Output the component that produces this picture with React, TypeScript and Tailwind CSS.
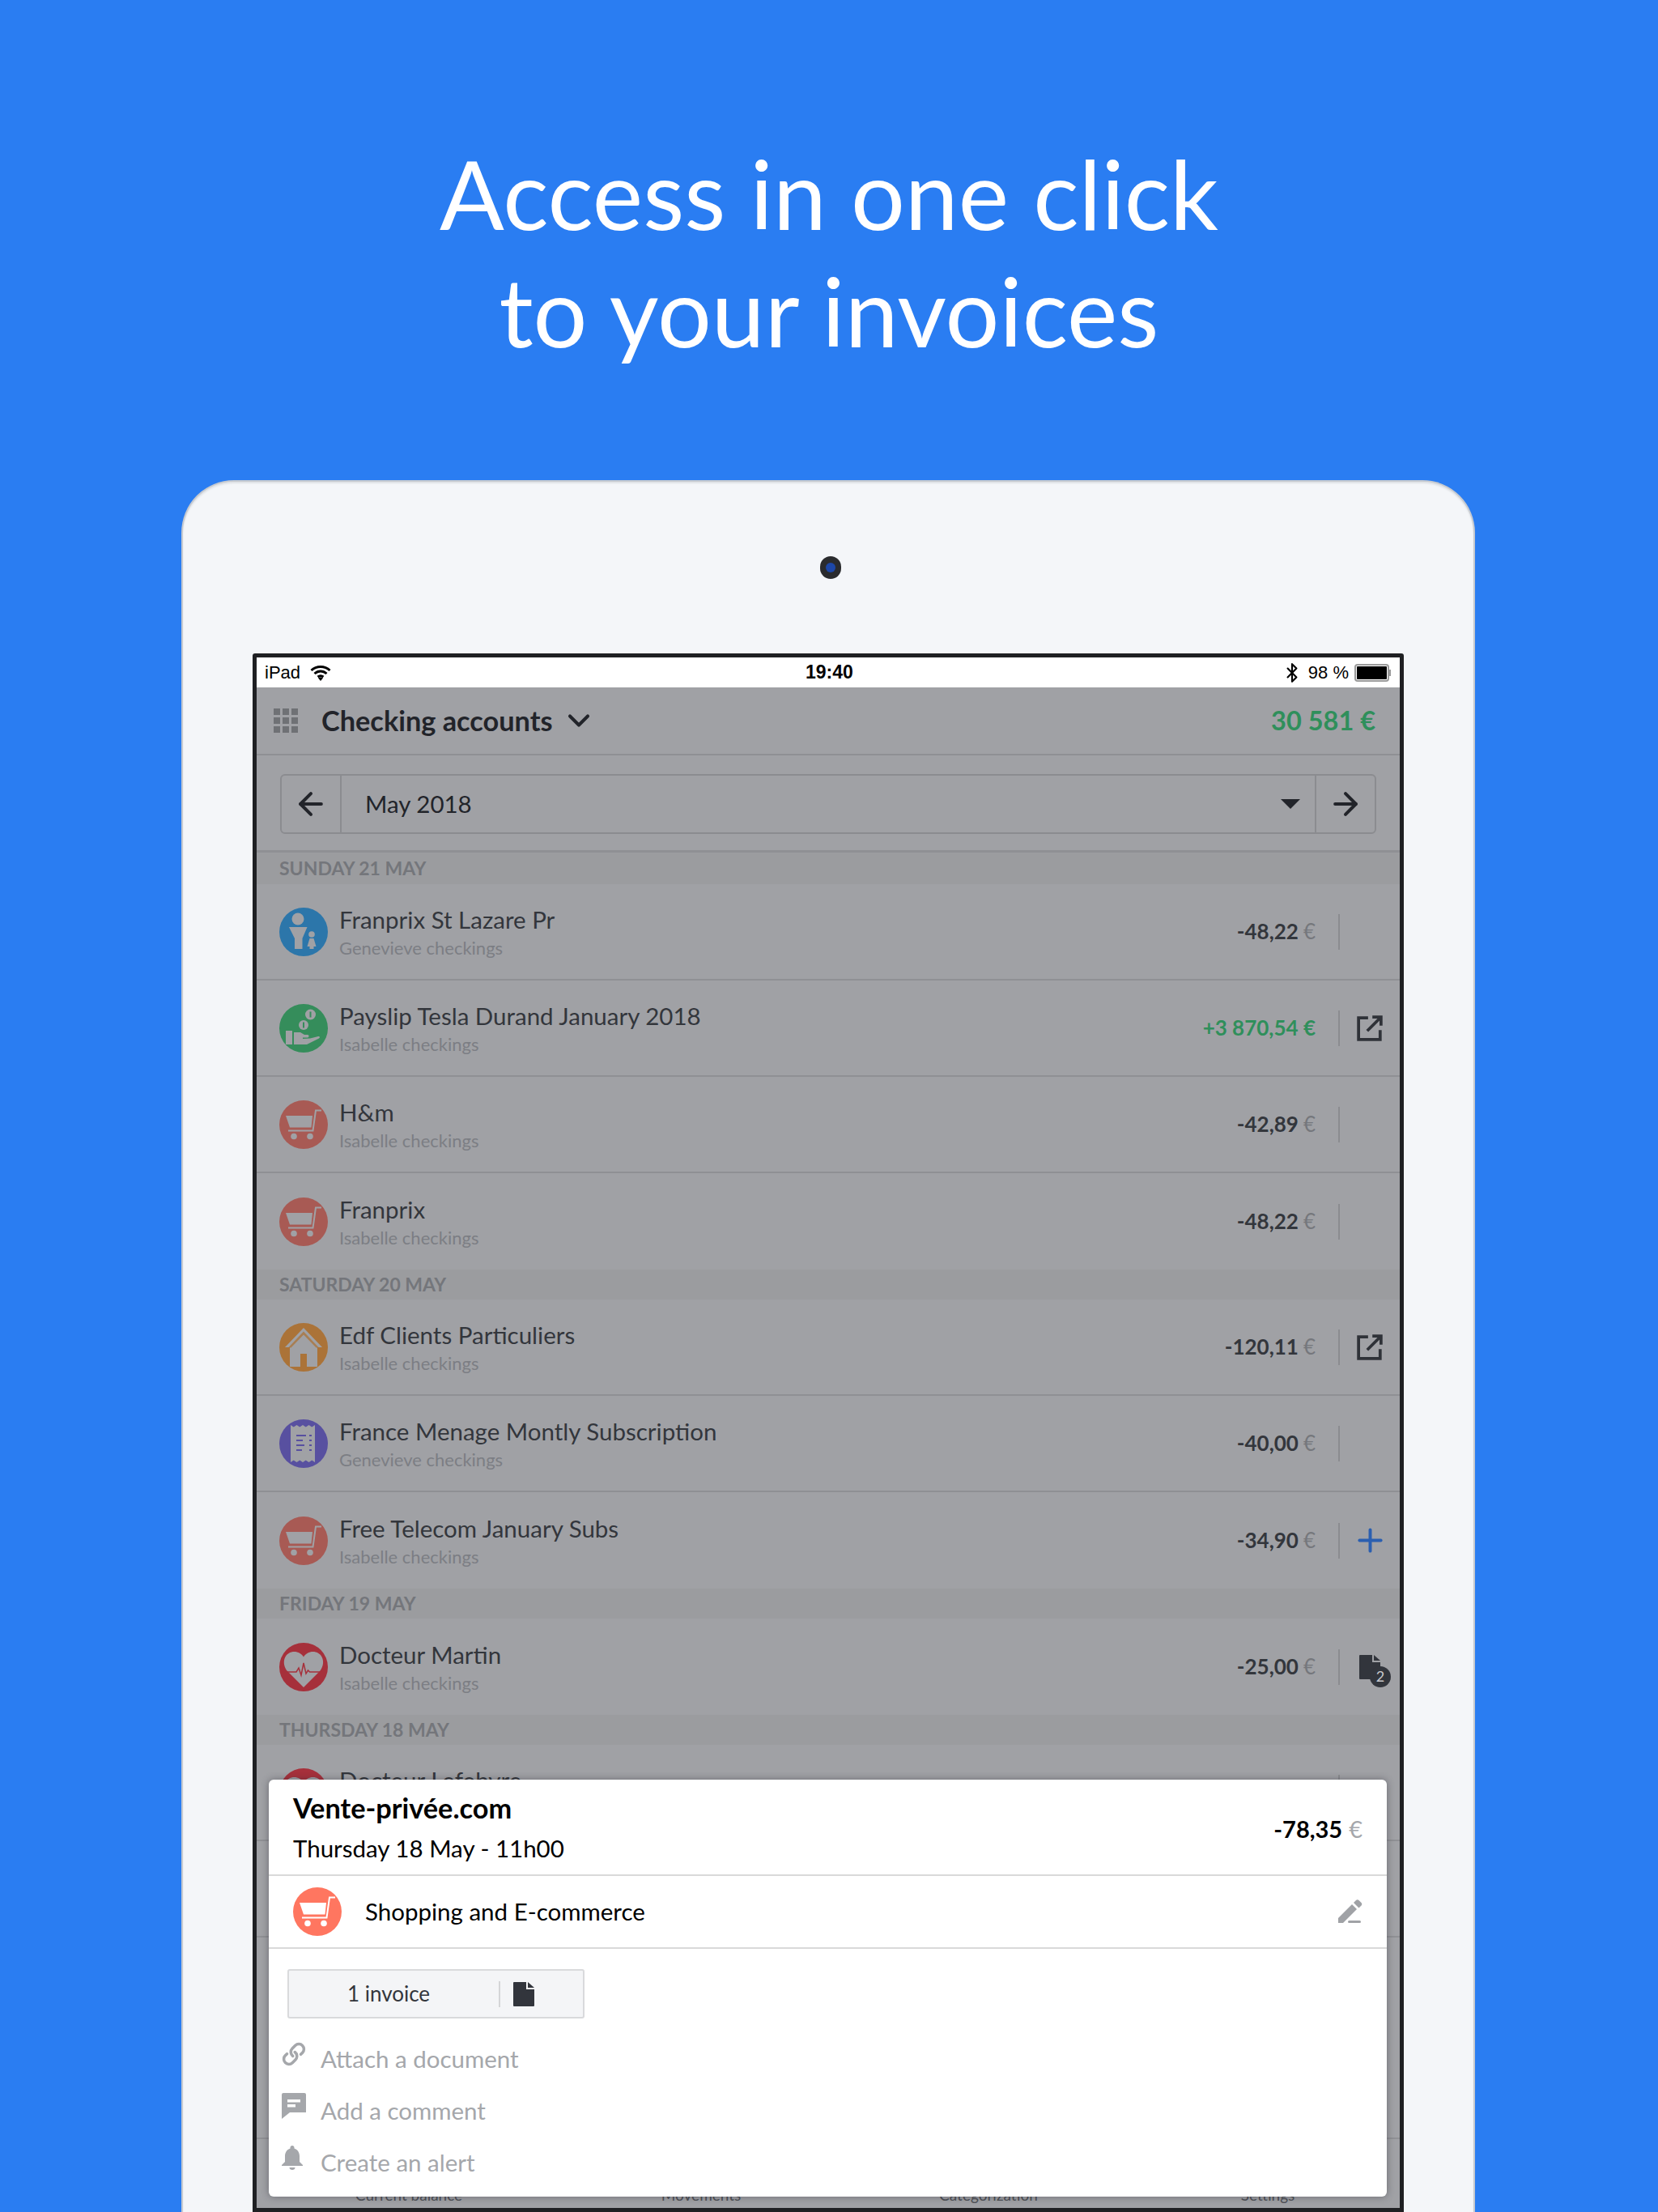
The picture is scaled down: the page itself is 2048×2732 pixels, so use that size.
import { ArrowLeft, ArrowRight, Bluetooth, ChevronDown, Link as LinkIcon, Plus } from 'lucide-react'
import type { ReactNode } from 'react'

function CartGlyph() {
  return (
    <>
      <path d="M8 19h33l-1.500 14.500H13L8 19z" fill="currentColor" />
      <path d="M11 37.500h30.500L45 12.500h7" fill="none" stroke="currentColor" strokeWidth="2" />
      <circle cx="18" cy="44.500" r="3.800" fill="currentColor" />
      <circle cx="38" cy="44.500" r="3.800" fill="currentColor" />
    </>
  )
}

function PersonGlyph() {
  return (
    <>
      <circle cx="23" cy="14" r="7.500" fill="currentColor" />
      <path d="M12 24h22.500l-6 14v13H19V38L12 24z" fill="currentColor" />
      <circle cx="40" cy="33" r="3.800" fill="currentColor" />
      <path d="M37.500 38h5l3 10h-3v3h-5v-3h-3l3-10z" fill="currentColor" />
    </>
  )
}

function HandGlyph({ bg }: { bg: string }) {
  return (
    <>
      <circle cx="38.500" cy="13" r="6.500" fill="currentColor" />
      <rect x="37.500" y="9.500" width="2" height="7" fill={bg} />
      <circle cx="30" cy="26" r="6" fill="currentColor" />
      <rect x="29" y="22.500" width="2" height="7" fill={bg} />
      <rect x="8" y="33" width="8" height="17" fill="currentColor" />
      <path d="M18 35h8l5 3h4c2 0 2 3 0 3.500h-6v1.500l9-.5 10-2.500c2.500 0 2.500 1.500 1 2.500L34 50H18V35z" fill="currentColor" />
    </>
  )
}

function HouseGlyph({ bg }: { bg: string }) {
  return (
    <>
      <path d="M30 6 7 30h6v24h34V30h6L30 6z" fill="currentColor" />
      <path d="M30 10.500 11 30.500h3.500L30 14.500l15.500 16H49L30 10.500z" fill={bg} opacity="0.75" />
      <rect x="26" y="38" width="8" height="16" fill={bg} />
    </>
  )
}

function ReceiptGlyph({ bg }: { bg: string }) {
  return (
    <>
      <path
        d="M14 7l3.750 2.500L21.500 7l3.750 2.500L29 7l3.750 2.500L36.500 7l3.750 2.500L44 7v46l-3.750-2.500L36.500 53l-3.750-2.500L29 53l-3.750-2.500L21.500 53l-3.750-2.500L14 53V7z"
        fill="currentColor"
      />
      <g fill={bg}>
        <rect x="21" y="19" width="12" height="2" />
        <rect x="21" y="25" width="8" height="2" />
        <rect x="21" y="31" width="10" height="2" />
        <rect x="21" y="37" width="7" height="2" />
        <rect x="37" y="19" width="3" height="2" />
        <rect x="37" y="25" width="3" height="2" />
        <rect x="37" y="31" width="3" height="2" />
        <rect x="37" y="37" width="3" height="2" />
      </g>
    </>
  )
}

function HeartGlyph({ bg }: { bg: string }) {
  return (
    <>
      <path d="M30 55 10 35C3 27 5 14 15 11.500c6-1.500 12 1 15 6 3-5 9-7.500 15-6C55 14 57 27 50 35L30 55z" fill="currentColor" />
      <path d="M8 36h13l3-5 3 9 3-15 3 13 2.500-4 2 2H52" fill="none" stroke={bg} strokeWidth="1.500" />
    </>
  )
}

type CategoryKind = 'cart' | 'person' | 'hand' | 'house' | 'receipt' | 'heart'

const CIRCLE_COLORS: Record<CategoryKind, string> = {
  cart: '#a85a54',
  person: '#2c76aa',
  hand: '#358d5b',
  house: '#ab7338',
  receipt: '#5850a0',
  heart: '#a6303b',
}

function CategoryIcon({ kind, bg, glyph = '#a0a1a5' }: { kind: CategoryKind; bg?: string; glyph?: string }) {
  const fill = bg ?? CIRCLE_COLORS[kind]
  return (
    <svg viewBox="0 0 60 60" className="h-[60px] w-[60px] shrink-0" style={{ color: glyph }}>
      <circle cx="30" cy="30" r="30" fill={fill} />
      {kind === 'cart' && <CartGlyph />}
      {kind === 'person' && <PersonGlyph />}
      {kind === 'hand' && <HandGlyph bg={fill} />}
      {kind === 'house' && <HouseGlyph bg={fill} />}
      {kind === 'receipt' && <ReceiptGlyph bg={fill} />}
      {kind === 'heart' && <HeartGlyph bg={fill} />}
    </svg>
  )
}

function DocIcon({ className }: { className: string }) {
  return (
    <svg viewBox="0 0 26 30" className={className} fill="currentColor">
      <path d="M1 0h15v9h10v20a1 1 0 0 1-1 1H1a1 1 0 0 1-1-1V1a1 1 0 0 1 1-1z" />
      <path d="M18 0l8 7h-8V0z" />
    </svg>
  )
}

function ExternalIcon() {
  return (
    <svg viewBox="0 0 30 30" className="h-[32px] w-[32px] text-[#2f3238]" fill="none" stroke="currentColor" strokeWidth="3.500">
      <path d="M13 3H2v25h25V17" />
      <path d="M12 18 27 3M18 2h10v10" />
    </svg>
  )
}

function RowAction({ action }: { action?: 'external' | 'plus' | 'docs' }) {
  if (action === 'external') return <ExternalIcon />
  if (action === 'plus') return <Plus size={45} strokeWidth={2.1} className="text-[#2b5fb0]" />
  if (action === 'docs') {
    return (
      <div className="relative h-[30px] w-[26px] text-[#32353c]">
        <DocIcon className="h-[30px] w-[26px]" />
        <span className="absolute -bottom-[10px] -right-[13px] flex h-[26px] w-[26px] items-center justify-center rounded-full bg-[#32353c] text-[18px] text-[#c8c9cc]">
          2
        </span>
      </div>
    )
  }
  return null
}

type Transaction = {
  name: string
  account: string
  amount: string
  kind: CategoryKind
  positive?: boolean
  action?: 'external' | 'plus' | 'docs'
}

function TransactionRow({ item, border = true }: { item: Transaction; border?: boolean }) {
  return (
    <div className={`flex h-[119px] shrink-0 items-center pl-[28px] ${border ? 'border-b-2 border-[#8f9094]' : ''}`}>
      <CategoryIcon kind={item.kind} />
      <div className="ml-[14px] flex flex-1 flex-col pt-[2px]">
        <span className="text-[29.500px] leading-[36px] text-[#33363c]">{item.name}</span>
        <span className="mt-[3px] text-[22px] leading-[28px] text-[#7c7e84]">{item.account}</span>
      </div>
      <div className="flex items-baseline gap-[6px] text-[26px] font-bold">
        {item.positive ? (
          <span className="text-[#2f8f5b]">{item.amount} €</span>
        ) : (
          <>
            <span className="text-[#33363c]">{item.amount}</span>
            <span className="font-normal text-[#75777c]">€</span>
          </>
        )}
      </div>
      <div className="ml-[28px] h-[44px] w-[2px] bg-[#8b8c90]" />
      <div className="flex w-[74px] justify-center">
        <RowAction action={item.action} />
      </div>
    </div>
  )
}

function SectionHeader({ children, className = 'h-[37px]' }: { children: ReactNode; className?: string }) {
  return (
    <div className={`flex shrink-0 items-center bg-[#9b9c9f] pl-[28px] text-[23px] font-bold text-[#74767b] ${className}`}>
      {children}
    </div>
  )
}

function ActionRow({ icon, label }: { icon: ReactNode; label: string }) {
  return (
    <div className="flex h-[64px] items-center">
      <div className="flex w-[64px] -translate-y-[6px] justify-start pl-[16px] text-[#a5a7ab]">{icon}</div>
      <span className="text-[29.500px] text-[#a5a7ab]">{label}</span>
    </div>
  )
}

function DetailCard() {
  return (
    <div className="absolute left-[15px] right-[16px] top-[1386px] h-[515px] rounded-[6px] bg-white shadow-[0_0_10px_rgba(40,40,50,0.45)]">
      <div className="flex h-[119px] items-center justify-between border-b-2 border-[#d9d9d9] pl-[30px] pr-[30px]">
        <div className="flex flex-col pt-[2px] text-black">
          <span className="text-[34.300px] font-bold leading-[42px]">Vente-privée.com</span>
          <span className="mt-[9px] text-[29.500px] leading-[40px]">Thursday 18 May - 11h00</span>
        </div>
        <div className="flex items-baseline gap-[8px] pt-[5px] text-[29px] font-bold">
          <span className="text-black">-78,35</span>
          <span className="font-normal text-[#a5a7ab]">€</span>
        </div>
      </div>
      <div className="flex h-[90px] items-center border-b-2 border-[#d9d9d9] pl-[30px] pr-[30px]">
        <CategoryIcon kind="cart" bg="#ff7660" glyph="#ffffff" />
        <span className="ml-[29px] flex-1 text-[29.500px] text-black">Shopping and E-commerce</span>
        <svg viewBox="0 0 30 30" className="h-[30px] w-[30px] text-[#a0a2a6]" fill="currentColor">
          <path d="M0 29v-6L17 6l6 6L6 29H0z" />
          <path d="M19 4l3-3c1-1 2.500-1 3.500 0l3 3c1 1 1 2.500 0 3.500L25.500 10.500 19 4z" />
          <rect x="12" y="26" width="16" height="3" rx="1.500" />
        </svg>
      </div>
      <div className="ml-[23px] mt-[25px] flex h-[61px] w-[367px] items-center rounded-[3px] border-2 border-[#d9dadc] bg-[#f4f5f7]">
        <span className="w-[246px] text-center text-[26px] text-[#33363c]">1 invoice</span>
        <div className="ml-[13px] h-[32px] w-[2px] bg-[#d4d5d7]" />
        <DocIcon className="ml-[16px] h-[30px] w-[26px] text-[#32353c]" />
      </div>
      <div className="mt-[18px] flex flex-col">
        <ActionRow icon={<LinkIcon size={30} strokeWidth={2.8} className="-scale-x-100 rotate-90" />} label="Attach a document" />
        <ActionRow
          icon={
            <svg viewBox="0 0 30 32" className="h-[32px] w-[30px]" fill="currentColor">
              <path d="M2 0h26a2 2 0 0 1 2 2v22H10L0 32V2a2 2 0 0 1 2-2z" />
              <rect x="7" y="8" width="16" height="3.500" fill="#fff" />
              <rect x="7" y="14" width="10" height="3.500" fill="#fff" />
            </svg>
          }
          label="Add a comment"
        />
        <ActionRow
          icon={
            <svg viewBox="0 0 26 30" className="h-[30px] w-[26px]" fill="currentColor">
              <path d="M13 0c1.500 0 2.500 1 2.500 2.500v1C20 5 22 9 22 13v7l4 4v1H0v-1l4-4v-7c0-4 2-8 6.500-9.500v-1C10.500 1 11.500 0 13 0z" />
              <path d="M9.500 27h7c0 2-1.500 3-3.500 3s-3.500-1-3.500-3z" />
            </svg>
          }
          label="Create an alert"
        />
      </div>
    </div>
  )
}

function StatusBar() {
  return (
    <div className="relative flex h-[37px] shrink-0 items-center justify-between bg-white pl-[10px] pr-[11px] font-['Liberation_Sans',sans-serif] text-[22px] text-black">
      <div className="flex items-center gap-[12px]">
        <span>iPad</span>
        <svg viewBox="0 0 26 20" className="h-[20px] w-[26px]" fill="none" stroke="currentColor" strokeWidth="3">
          <path d="M1.500 7c6.500-6 16.500-6 23 0M5.500 11c4.500-4 10.500-4 15 0M9.500 15c2-1.500 5-1.500 7 0" />
          <path d="M13 20l-3-3.500c2-1.300 4-1.300 6 0L13 20z" fill="currentColor" stroke="none" />
        </svg>
      </div>
      <span className="absolute left-[678px] text-[23px] font-bold">19:40</span>
      <div className="flex items-center gap-[7px]">
        <Bluetooth size={26} strokeWidth={2} />
        <span>98 %</span>
        <div className="flex items-center">
          <div className="h-[22px] w-[43px] rounded-[4px] border-2 border-[#9a9a9a] bg-black bg-clip-content p-[1px]" />
          <div className="h-[8px] w-[2px] bg-[#9a9a9a]" />
        </div>
      </div>
    </div>
  )
}

function AppHeader() {
  return (
    <div className="flex h-[84px] shrink-0 items-center border-b-2 border-[#8f9094] pl-[21px] pr-[30px]">
      <div className="grid grid-cols-3 gap-[3px]">
        {Array.from({ length: 9 }, (_, i) => (
          <div key={i} className="h-[8px] w-[8px] bg-[#6f7175]" />
        ))}
      </div>
      <span className="ml-[29px] text-[34.300px] font-bold text-[#22242a]">Checking accounts</span>
      <ChevronDown size={44} strokeWidth={2.2} className="ml-[10px] text-[#22242a]" />
      <span className="ml-auto text-[32.500px] font-bold text-[#2f8f5b]">30 581 €</span>
    </div>
  )
}

function MonthPicker() {
  return (
    <div className="flex h-[120px] shrink-0 items-start border-b-[3px] border-[#8f9094] px-[29px] pt-[23px]">
      <div className="flex h-[74px] flex-1 items-center rounded-[6px] border-2 border-[#8b8c90]">
        <div className="flex h-full w-[74px] items-center justify-center border-r-2 border-[#8b8c90]">
          <ArrowLeft size={44} strokeWidth={2.2} className="text-[#22242a]" />
        </div>
        <span className="ml-[29px] flex-1 text-[29.500px] text-[#22242a]">May 2018</span>
        <div className="mr-[18px] h-0 w-0 border-x-[12px] border-t-[12px] border-x-transparent border-t-[#22242a]" />
        <div className="flex h-full w-[74px] items-center justify-center border-l-2 border-[#8b8c90]">
          <ArrowRight size={44} strokeWidth={2.2} className="text-[#22242a]" />
        </div>
      </div>
    </div>
  )
}

const sunday: Transaction[] = [
  { name: 'Franprix St Lazare Pr', account: 'Genevieve checkings', amount: '-48,22', kind: 'person' },
  { name: 'Payslip Tesla Durand January 2018', account: 'Isabelle checkings', amount: '+3 870,54', kind: 'hand', positive: true, action: 'external' },
  { name: 'H&m', account: 'Isabelle checkings', amount: '-42,89', kind: 'cart' },
  { name: 'Franprix', account: 'Isabelle checkings', amount: '-48,22', kind: 'cart' },
]

const saturday: Transaction[] = [
  { name: 'Edf Clients Particuliers', account: 'Isabelle checkings', amount: '-120,11', kind: 'house', action: 'external' },
  { name: 'France Menage Montly Subscription', account: 'Genevieve checkings', amount: '-40,00', kind: 'receipt' },
  { name: 'Free Telecom January Subs', account: 'Isabelle checkings', amount: '-34,90', kind: 'cart', action: 'plus' },
]

export default function App() {
  return (
    <div className="h-[2732px] overflow-hidden bg-[#2a7df2] font-['Lato',sans-serif]">
      <div className="flex h-[593px] flex-col items-center pt-[166px] text-center text-[118px] font-normal leading-[145px] text-white">
        <span>Access in one click</span>
        <span>to your invoices</span>
      </div>

      <div className="ml-[224px] flex h-[2139px] w-[1598px] flex-col items-center rounded-t-[65px] border-2 border-b-0 border-[#c6cad0] bg-[#f4f6f9] pt-[92px] shadow-[inset_0_2px_2px_#dfe2e6]">
        <div className="relative ml-[5px] flex h-[28px] w-[26px] items-center justify-center rounded-full bg-[#2a2b2e]">
          <div className="h-[12px] w-[12px] rounded-full bg-[#1d47a8]" />
        </div>

        <div className="relative mt-[92px] flex h-[1925px] w-[1422px] flex-col overflow-hidden rounded-t-[3px] border-[5px] border-[#1f2023] bg-[#a0a1a5]">
          <StatusBar />
          <AppHeader />
          <MonthPicker />
          <SectionHeader className="h-[39px]">SUNDAY 21 MAY</SectionHeader>
          {sunday.map((item, i) => (
            <TransactionRow key={i} item={item} border={i < sunday.length - 1} />
          ))}
          <SectionHeader>SATURDAY 20 MAY</SectionHeader>
          {saturday.map((item, i) => (
            <TransactionRow key={i} item={item} border={i < saturday.length - 1} />
          ))}
          <SectionHeader>FRIDAY 19 MAY</SectionHeader>
          <TransactionRow
            item={{ name: 'Docteur Martin', account: 'Isabelle checkings', amount: '-25,00', kind: 'heart', action: 'docs' }}
            border={false}
          />
          <SectionHeader>THURSDAY 18 MAY</SectionHeader>
          <TransactionRow item={{ name: 'Docteur Lefebvre', account: 'Isabelle checkings', amount: '-78,35', kind: 'heart' }} />
          <div className="h-[119px] shrink-0 border-b-2 border-[#8f9094]" />
          <div className="h-[249px] shrink-0 border-b-2 border-[#8f9094]" />
          <div className="grid shrink-0 grid-cols-[376px_346px_364px_326px] pt-[55px] text-center text-[19px] leading-[28px] text-[#4e5056]">
            <span>Current balance</span>
            <span>Movements</span>
            <span>Categorization</span>
            <span>Settings</span>
          </div>
          <DetailCard />
        </div>
      </div>
    </div>
  )
}
